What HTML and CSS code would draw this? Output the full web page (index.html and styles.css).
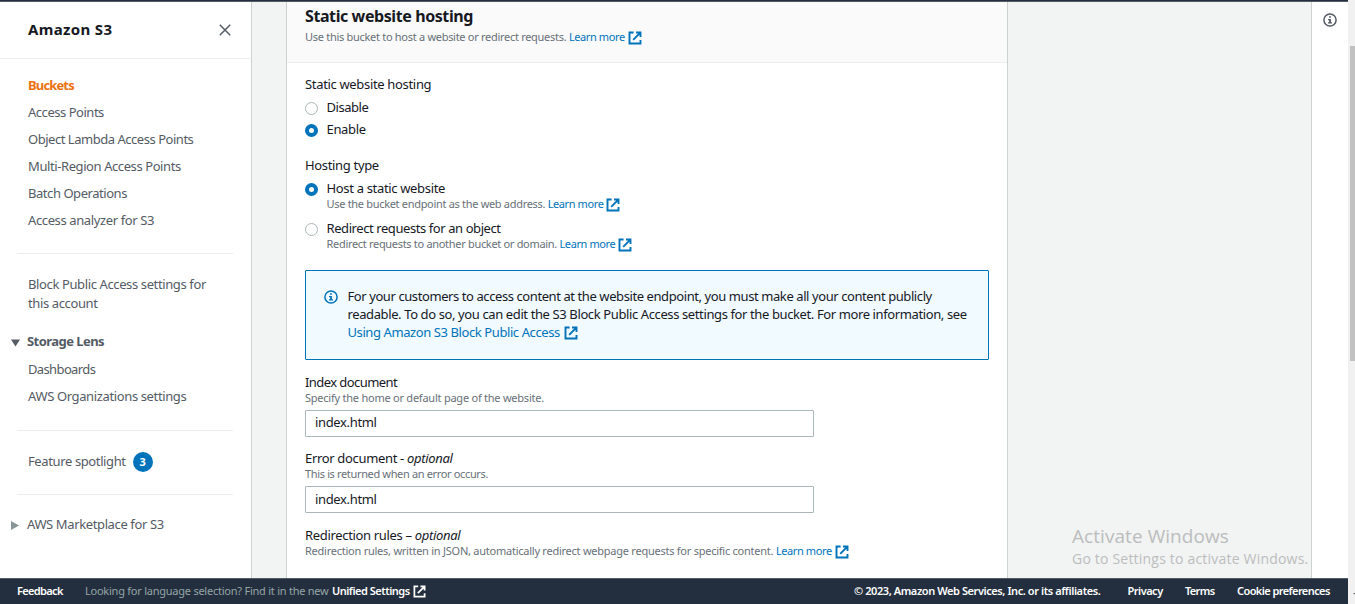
FILE: index.html
```html
<!DOCTYPE html>
<html lang="en">
<head>
<meta charset="utf-8">
<title>Amazon S3 - Static website hosting</title>
<link rel="stylesheet" href="styles.css">
</head>
<body>
<svg class="defs" aria-hidden="true">
  <symbol id="ext" viewBox="0 0 14 14"><path d="M5.600 1.500H1.500v11H12.500V9M8 1.500h4.500V6M12.300 1.700 5.200 8.800" fill="none" stroke="currentColor" stroke-width="1.9"/></symbol>
  <symbol id="info" viewBox="0 0 14 14"><circle cx="7" cy="7" r="6.100" fill="none" stroke="currentColor" stroke-width="1.500"/><path d="M6.100 3.200h1.800v1.600H6.100zM5 5.900h2.900v3.400H9v1.300H5V9.300h1.100V7.200H5z" fill="currentColor"/></symbol>
</svg>
<div class="app">
  <div class="topbar"></div>
  <div class="middle">
    <nav class="sidebar">
      <div class="side-head"><span class="side-title">Amazon S3</span>
        <svg class="close" viewBox="0 0 12 12"><path d="M.8.8l10.4 10.4M11.2.8.8 11.2" stroke="#545b64" stroke-width="1.5" fill="none"/></svg></div>
      <ul class="links first">
        <li class="active"><span>Buckets</span></li>
        <li><span class="l-ap">Access Points</span></li>
        <li><span class="l-ol">Object Lambda Access Points</span></li>
        <li><span class="l-mr">Multi-Region Access Points</span></li>
        <li><span class="l-bo">Batch Operations</span></li>
        <li><span class="l-aa">Access analyzer for S3</span></li>
      </ul>
      <hr>
      <p class="block"><span>Block Public Access settings for<br>this account</span></p>
      <div class="group open"><svg class="tri" viewBox="0 0 10 8"><path d="M0 0h10L5 8z" fill="#545b64"/></svg><b>Storage Lens</b></div>
      <ul class="links second">
        <li><span class="l-db">Dashboards</span></li>
        <li><span class="l-os">AWS Organizations settings</span></li>
      </ul>
      <hr>
      <div class="spot"><span>Feature spotlight</span><i class="badge">3</i></div>
      <hr>
      <div class="group market"><svg class="tri right" viewBox="0 0 8 9"><path d="M0 0v9l8-4.500z" fill="#879596"/></svg><span>AWS Marketplace for S3</span></div>
    </nav>
    <main class="content">
      <section class="card">
        <header class="card-head">
          <h2><span>Static website hosting</span></h2>
          <p class="desc d1"><span>Use this bucket to host a website or redirect requests. <a>Learn more</a></span><svg class="ext"><use href="#ext"/></svg></p>
        </header>
        <div class="card-body">
          <div class="label first-label"><span class="t-sw">Static website hosting</span></div>
          <div class="radio r1"><i class="dot"></i><span class="t-di">Disable</span></div>
          <div class="radio r2"><i class="dot on"></i><span class="t-en">Enable</span></div>
          <div class="label ht"><span class="t-ht">Hosting type</span></div>
          <div class="radio r3"><i class="dot on"></i><span class="t-hs">Host a static website</span></div>
          <p class="desc indent d2"><span>Use the bucket endpoint as the web address. <a>Learn more</a></span><svg class="ext"><use href="#ext"/></svg></p>
          <div class="radio r4"><i class="dot"></i><span class="t-rr">Redirect requests for an object</span></div>
          <p class="desc indent d3"><span>Redirect requests to another bucket or domain. <a>Learn more</a></span><svg class="ext"><use href="#ext"/></svg></p>
          <div class="alert">
            <svg class="info"><use href="#info"/></svg>
            <div class="alert-text">
              <div><span class="a1">For your customers to access content at the website endpoint, you must make all your content publicly</span></div>
              <div><span class="a2">readable. To do so, you can edit the S3 Block Public Access settings for the bucket. For more information, see</span></div>
              <div class="a-link"><a class="a3">Using Amazon S3 Block Public Access</a><svg class="ext"><use href="#ext"/></svg></div>
            </div>
          </div>
          <div class="label"><span class="t-id">Index document</span></div>
          <p class="desc d4"><span>Specify the home or default page of the website.</span></p>
          <div class="input"><span>index.html</span></div>
          <div class="label"><span class="t-ed">Error document - <em>optional</em></span></div>
          <p class="desc d5"><span>This is returned when an error occurs.</span></p>
          <div class="input second-input"><span>index.html</span></div>
          <div class="label"><span class="t-rd">Redirection rules – <em>optional</em></span></div>
          <p class="desc d6"><span>Redirection rules, written in JSON, automatically redirect webpage requests for specific content. <a>Learn more</a></span><svg class="ext"><use href="#ext"/></svg></p>
        </div>
      </section>
      <div class="watermark"><div class="w1"><span>Activate Windows</span></div><div class="w2"><span>Go to Settings to activate Windows.</span></div></div>
    </main>
    <aside class="help"><svg class="info"><use href="#info"/></svg></aside>
  </div>
  <footer class="footer">
    <span class="f-fb">Feedback</span>
    <span class="f-lang">Looking for language selection? Find it in the new</span>
    <span class="f-us">Unified Settings</span><svg class="ext"><use href="#ext"/></svg>
    <span class="f-c">© 2023, Amazon Web Services, Inc. or its affiliates.</span>
    <span class="f-p">Privacy</span>
    <span class="f-t">Terms</span>
    <span class="f-k">Cookie preferences</span>
  </footer>
  <div class="scroll"><div class="thumb"></div><i class="arrow"></i></div>
</div>
</body>
</html>
```
FILE: styles.css
```css
* { box-sizing: border-box; margin: 0; padding: 0; }
body { font: 13px/18px "Noto Sans", "Open Sans", sans-serif; color: #16191f; width: 1355px; height: 604px; overflow: hidden; }
span, a, b { white-space: nowrap; }
ul { list-style: none; }
.defs { position: absolute; width: 0; height: 0; }
.app { display: grid; grid-template: 2px 576px 26px / 1348px 7px; }
.topbar { background: #232f3e; border-bottom: 1px solid #545b64; }
.middle { display: flex; grid-row: 2; overflow: hidden; }

.sidebar { width: 252px; background: #fff; border-right: 1px solid #ccd1d1; color: #545b64; flex: none; letter-spacing: -0.38px; }
.side-head { height: 57px; border-bottom: 1px solid #eaeded; display: flex; align-items: center; justify-content: space-between; padding: 0 20px 1px 28px; }
.side-title { font-size: 15px; font-weight: 700; color: #16191f; letter-spacing: 0.35px; padding-bottom: 1px; }
.close { width: 12px; height: 12px; }
.links li { height: 27px; line-height: 27px; padding-left: 28px; }
.first { padding-top: 13px; height: 194px; }
.active { color: #ec7211; font-weight: 700; letter-spacing: -0.85px; }
.l-ap, .l-ol { letter-spacing: -0.47px; }
.l-mr { letter-spacing: -0.41px; }
.l-bo { letter-spacing: -0.45px; }
.l-db { letter-spacing: -0.63px; }
.l-os { letter-spacing: -0.37px; }
.group b { letter-spacing: -0.55px; }
hr { border: 0; height: 1px; background: #eaeded; margin: 0 18px 0 17px; }
.block { line-height: 19px; padding: 21px 0 0 28px; height: 78px; }
.group { display: flex; align-items: center; height: 18px; padding-left: 11px; color: #545b64; }
.tri { width: 9px; height: 8px; margin: 3px 7px 0 0; }
.right { width: 8px; height: 9px; margin: 3px 8px 0 0; }
.second { height: 80px; padding-top: 6px; }
.spot { height: 63px; display: flex; align-items: center; padding: 0 0 4px 28px; }
.badge { width: 20px; height: 20px; border-radius: 50%; background: #0073bb; color: #fff; font: 700 11px/20px "Noto Sans", sans-serif; text-align: center; margin: 3px 0 0 7px; letter-spacing: 0; }
.market { margin-top: 20px; }

.content { flex: 1; background: #f2f3f3; padding-left: 34px; position: relative; }
.card { width: 722px; height: 576px; background: #fff; border: 1px solid #ccd1d1; border-width: 0 1px; }
.card-head { height: 61px; background: #fafafa; border-bottom: 1px solid #eaeded; padding: 4px 18px 0; }
h2 { font-size: 16px; line-height: 21px; font-weight: 700; letter-spacing: -0.41px; }
.desc { display: flex; height: 15px; font-size: 11px; line-height: 15px; color: #687078; }
.desc a { letter-spacing: -0.4px; }
.desc .ext { margin: 2px 0 0 3px; }
a { color: #0073bb; }
.ext { width: 14px; height: 14px; color: #0073bb; flex: none; }
.card-head .d1 { margin-top: 2px; }
.d1 { letter-spacing: -0.29px; }
.d2, .d3 { letter-spacing: -0.31px; }
.card-body { padding: 12px 18px 0; }
.first-label { margin-bottom: 5px; }
.label, .radio { height: 18px; display: flex; align-items: center; letter-spacing: -0.33px; }
.t-di { letter-spacing: -0.45px; }
.t-rr { letter-spacing: -0.42px; }
.t-id { letter-spacing: -0.57px; }
.dot { width: 13px; height: 13px; border: 1px solid #aab7b8; border-radius: 50%; margin: 2px 8.500px 0 0; flex: none; background: #fff; }
.dot.on { border: 4px solid #0073bb; }
.r2, .r4 { align-items: flex-start; }
.r2 .dot, .r4 .dot { margin-top: 4px; }
.r2 { margin-top: 4px; }
.ht { margin-top: 18px; }
.r3 { margin-top: 5px; }
.r4 { margin-top: 8px; }
.indent { padding-left: 21.500px; margin-top: -1px; }
.alert { margin-top: 19px; height: 90px; border: 1px solid #0073bb; border-radius: 1px; background: #f1faff; display: flex; padding: 16px 18px; }
.info { width: 14px; height: 14px; color: #0073bb; flex: none; }
.alert .info { margin: 3px 9.500px 0 0; }
.a1 { letter-spacing: -0.415px; }
.a2 { letter-spacing: -0.387px; }
.a3 { letter-spacing: -0.41px; }
.a-link { display: flex; }
.a-link .ext { margin: 3px 0 0 4px; }
.alert + .label { margin-top: 13px; }
.d4, .d5, .d6 { margin-top: -1px; }
.d4 { letter-spacing: -0.235px; }
.d5 { letter-spacing: -0.35px; }
.d6 { letter-spacing: -0.245px; }
.input { width: 509px; height: 27px; border: 1px solid #aab7b8; border-radius: 1px; margin: 5px 0 12px; padding: 0 9px; line-height: 23px; letter-spacing: -0.35px; }
.second-input { margin-bottom: 13px; line-height: 25px; }

.watermark { position: absolute; left: 820px; top: 522px; color: #bbbdbd; font-family: "Open Sans", sans-serif; }
.w1 { font-size: 19px; line-height: 24px; letter-spacing: 0.06px; }
.w2 { font-size: 14px; line-height: 21px; letter-spacing: 0.2px; }
.help { width: 37px; flex: none; background: #fff; border-left: 1px solid #ccd1d1; padding: 11px 0 0 11px; }
.help .info { color: #545b64; }

.footer { grid-row: 3; background: #232f3e; border-top: 1px solid #545b64; color: #fff; display: flex; font-size: 11px; font-weight: 600; line-height: 23px; padding-left: 17px; letter-spacing: -0.5px; }
.footer .ext { color: #fff; margin: 6px 0 0 2px; width: 13px; height: 13px; }
.footer span { flex: none; }
.f-fb { width: 68px; letter-spacing: -0.65px; }
.f-lang { width: 247px; color: #95a5a6; font-weight: 400; letter-spacing: -0.24px; }
.f-us { width: 79px; }
.f-c { width: 273.500px; margin-left: 428px; letter-spacing: -0.42px; }
.f-p { width: 57.500px; }
.f-t { width: 52px; letter-spacing: -0.65px; }
.f-k { letter-spacing: -0.58px; }
.scroll { grid-column: 2; grid-row: 1 / 4; background: #f1f1f1; padding: 46px 0 0 2px; }
.thumb { height: 315px; background: #c1c1c1; }
.arrow { display: block; width: 4px; height: 3px; margin: 232px 0 0 3px; background: #505050; clip-path: polygon(0 0, 100% 0, 100% 100%); }
```
